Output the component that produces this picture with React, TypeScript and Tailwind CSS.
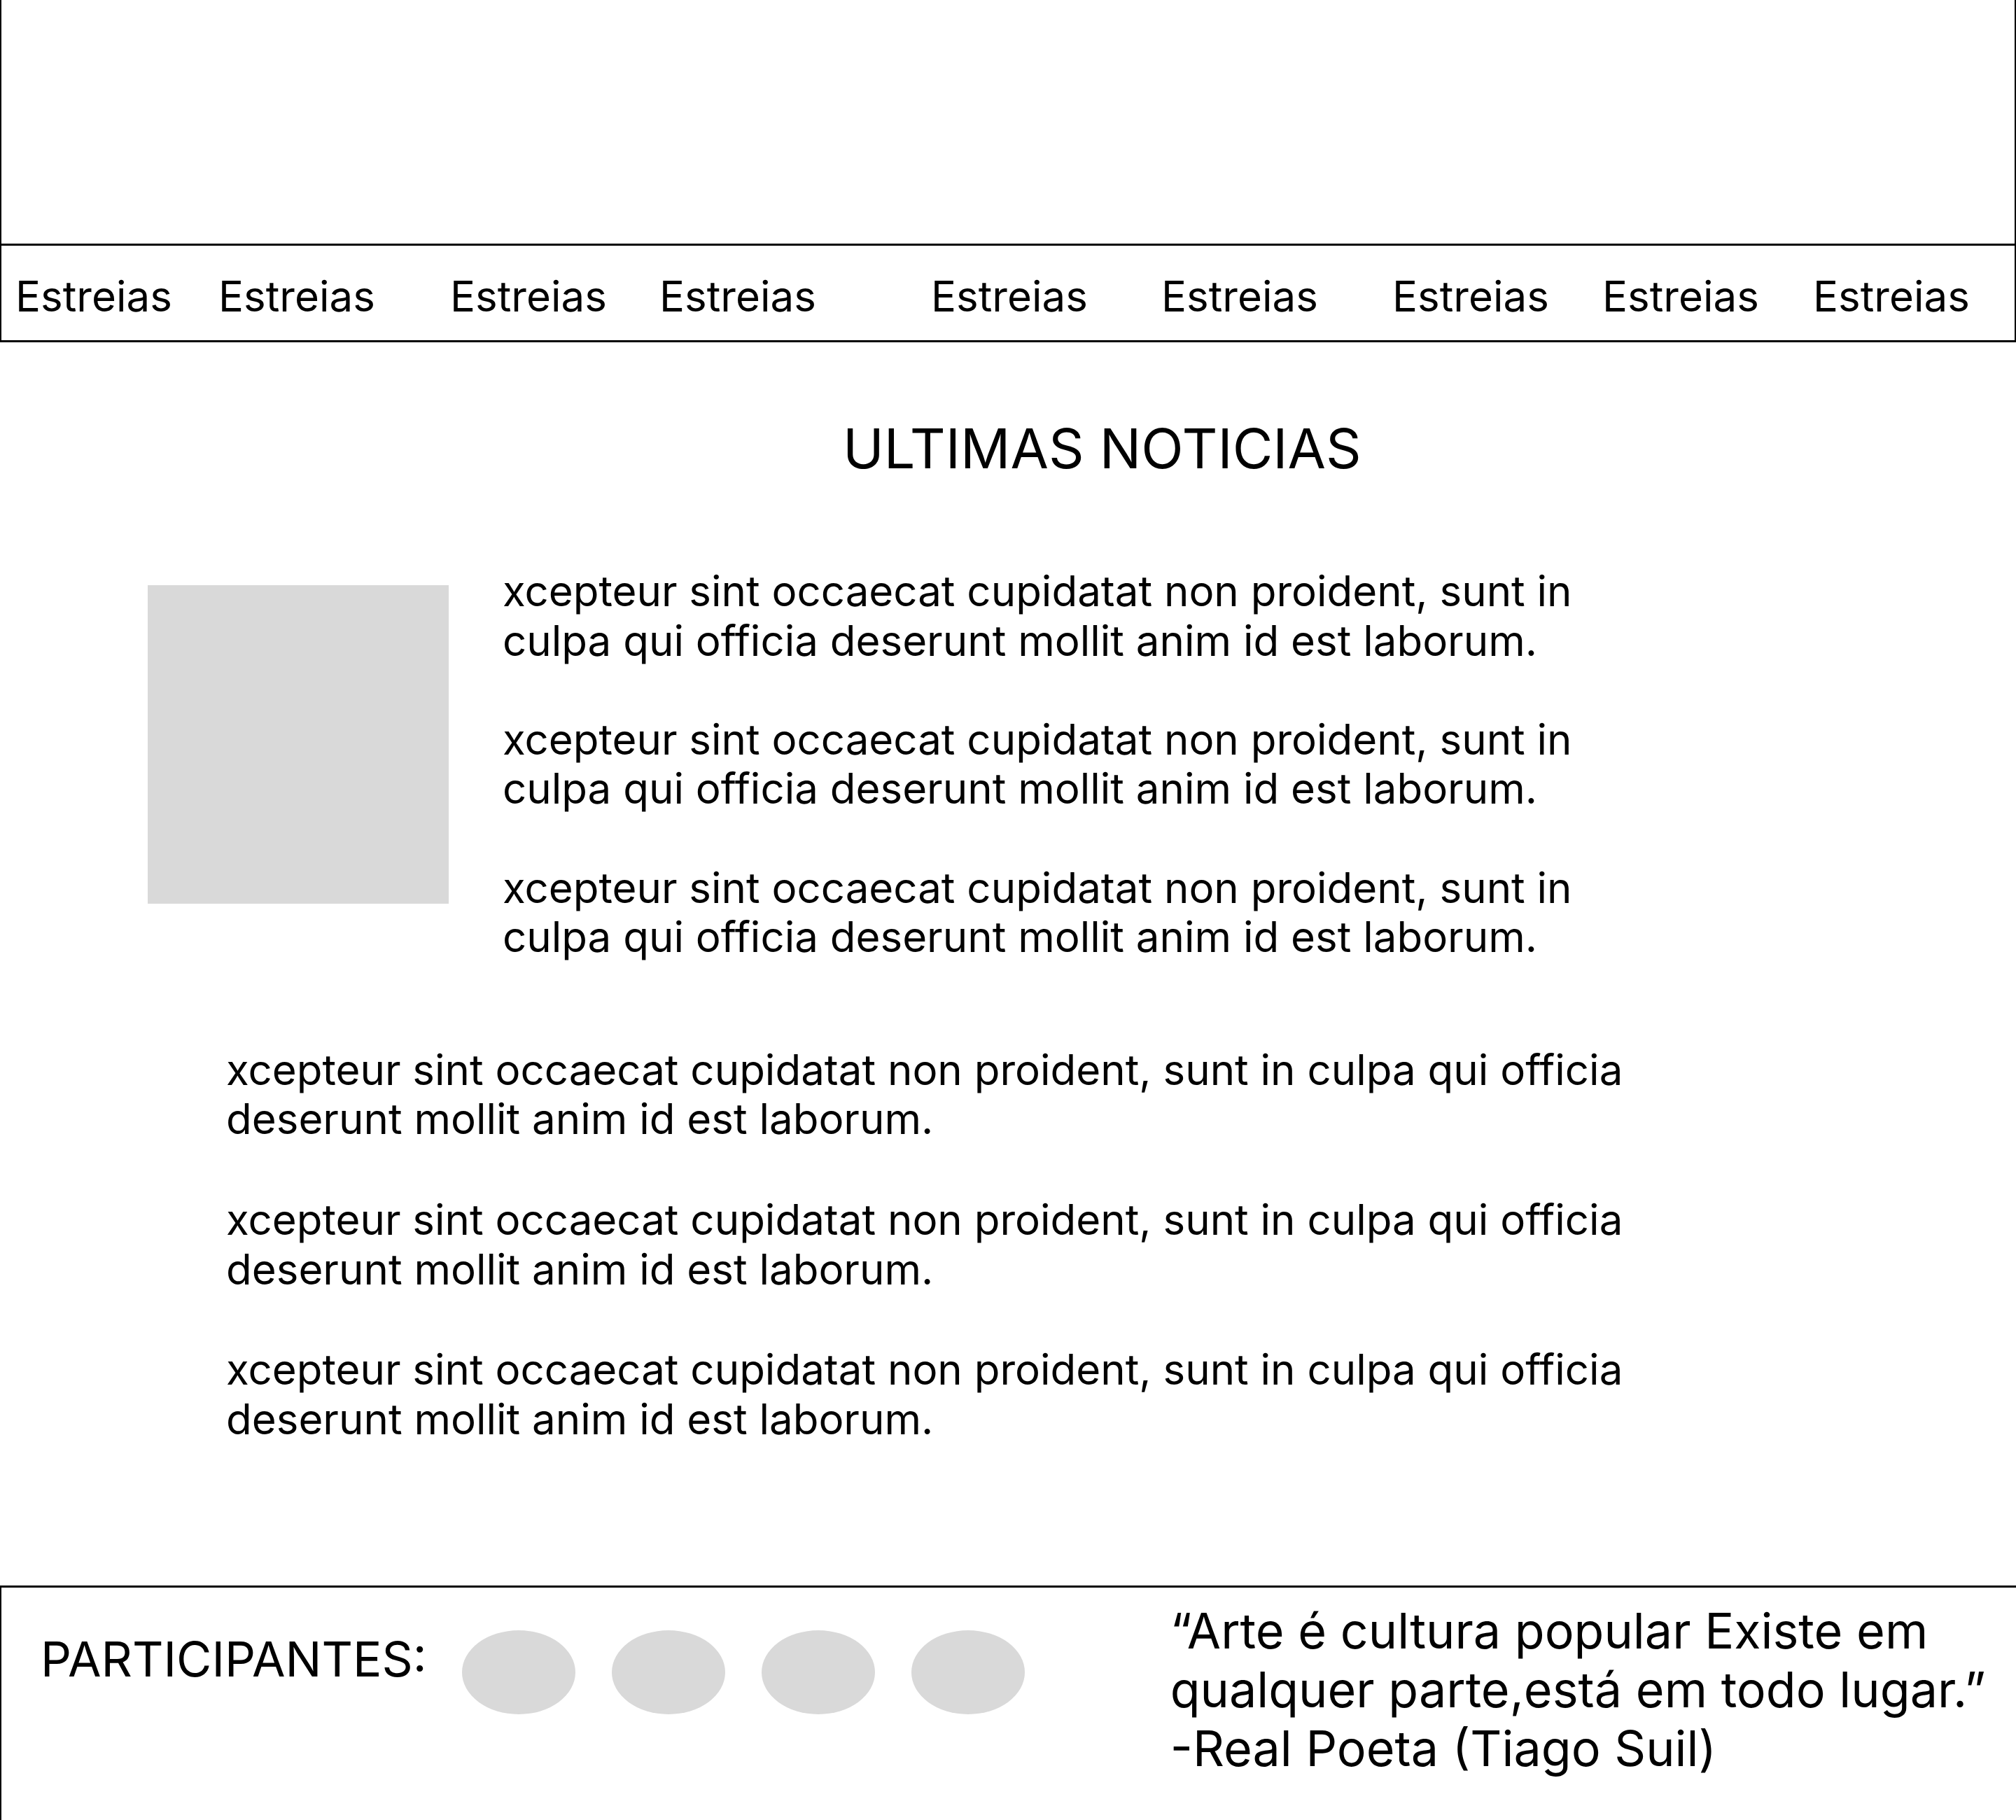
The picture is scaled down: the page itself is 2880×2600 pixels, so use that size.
const navItems = [
  { label: 'Estreias', w: 'w-[290px]' },
  { label: 'Estreias', w: 'w-[331px]' },
  { label: 'Estreias', w: 'w-[299px]' },
  { label: 'Estreias', w: 'w-[388px]' },
  { label: 'Estreias', w: 'w-[329px]' },
  { label: 'Estreias', w: 'w-[330px]' },
  { label: 'Estreias', w: 'w-[300px]' },
  { label: 'Estreias', w: 'w-[301px]' },
  { label: 'Estreias', w: 'w-auto' },
];

const lorem = 'xcepteur sint occaecat cupidatat non proident, sunt in culpa qui officia deserunt mollit anim id est laborum.';

function NewsParagraphs({ gap }: { gap: string }) {
  return (
    <>
      {[0, 1, 2].map((i) => (
        <p key={i} className={i < 2 ? gap : ''}>
          {lorem}
        </p>
      ))}
    </>
  );
}

export default function App() {
  return (
    <div className="w-[2880px] h-[2600px] bg-white text-black font-['Inter',sans-serif] overflow-hidden">
      {/* header */}
      <div className="h-[348px] border-l-2 border-r-2 border-black" />

      {/* nav */}
      <nav className="h-[141px] border-y-[3px] border-x-2 border-black flex pl-[20px] pt-[36px] text-[60px] leading-[72.6px]">
        {navItems.map((item, i) => (
          <span key={i} className={`${item.w} shrink-0`}>
            {item.label}
          </span>
        ))}
      </nav>

      {/* title */}
      <h1 className="mt-[103px] ml-[1204px] text-[79px] leading-[97px] font-normal">ULTIMAS NOTICIAS</h1>

      {/* news with image */}
      <section className="mt-[120px] flex items-start">
        <div className="ml-[211px] mt-[27px] w-[430px] h-[455px] bg-[#d9d9d9] shrink-0" />
        <div className="ml-[77px] w-[1620px] text-[60px] leading-[70.6px]">
          <NewsParagraphs gap="mb-[70.6px]" />
        </div>
      </section>

      {/* more news */}
      <section className="mt-[119px] ml-[323px] w-[2150px] text-[60px] leading-[70.6px]">
        <NewsParagraphs gap="mb-[73px]" />
      </section>

      {/* footer */}
      <footer className="mt-[203px] h-[336px] border-t-[3px] border-l-2 border-black flex items-start">
        <div className="ml-[56px] mt-[60px] text-[69px] leading-[84px] shrink-0">PARTICIPANTES:</div>
        <div className="ml-[50px] mt-[61px] flex gap-[52px]">
          {[0, 1, 2, 3].map((i) => (
            <div key={i} className="w-[162px] h-[120px] rounded-[50%] bg-[#d9d9d9]" />
          ))}
        </div>
        <blockquote className="ml-[208px] mt-[20px] text-[70px] leading-[84px]">
          “Arte é cultura popular Existe em
          <br />
          qualquer parte,está em todo lugar.”
          <br />
          -Real Poeta (Tiago Suil)
        </blockquote>
      </footer>
    </div>
  );
}
